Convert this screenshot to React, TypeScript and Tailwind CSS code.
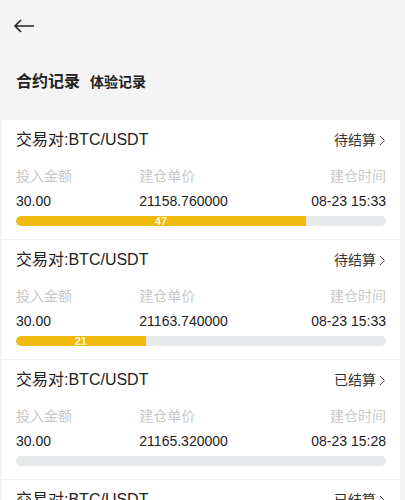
const records = [
  { price: '21158.760000', time: '08-23 15:33', status: '待结算', left: 47 },
  { price: '21163.740000', time: '08-23 15:33', status: '待结算', left: 21 },
  { price: '21165.320000', time: '08-23 15:28', status: '已结算', left: 0 },
  { price: '21165.320000', time: '08-23 15:28', status: '已结算', left: 0 },
];

function Chevron() {
  return (
    <svg width="7" height="11" viewBox="0 0 7 11" fill="none" className="ml-[3px]">
      <path d="M1 1l4.5 4.5L1 10" stroke="#555" strokeWidth="1" />
    </svg>
  );
}

function RecordCard({ price, time, status, left }: (typeof records)[number]) {
  return (
    <div className="border-b border-[#f1f1f1] px-[14px] pt-2 pb-[13px]">
      <div className="flex h-6 items-center justify-between">
        <span className="text-[16px] text-[#222]">交易对:BTC/USDT</span>
        <span className="flex items-center text-[14px] text-[#333]">
          {status}
          <Chevron />
        </span>
      </div>
      <div className="mt-[14px] grid h-5 grid-cols-3 items-center text-[14px] text-[#c8c8c8]">
        <span>投入金额</span>
        <span>建仓单价</span>
        <span className="text-right">建仓时间</span>
      </div>
      <div className="mt-[5px] grid h-5 grid-cols-3 items-center text-[14px] text-[#222]">
        <span>30.00</span>
        <span>{price}</span>
        <span className="text-right">{time}</span>
      </div>
      <div className="mt-[5px] h-[10px] overflow-hidden rounded-full bg-[#e8e9eb]">
        {left > 0 && (
          <div
            className="flex h-full items-center justify-center rounded-l-full bg-[#f0b90b] text-[11px] font-semibold leading-[10px] text-[#fff6d8]"
            style={{ width: `${(left / 60) * 100}%` }}
          >
            {left}
          </div>
        )}
      </div>
    </div>
  );
}

export default function App() {
  return (
    <div
      className="h-[500px] w-[405px] overflow-hidden bg-[#f4f4f4]"
      style={{ fontFamily: '"Liberation Sans", "Noto Sans CJK SC", sans-serif' }}
    >
      <div className="h-[120px] px-4">
        <div className="pt-[19px]">
          <svg width="22" height="14" viewBox="0 0 22 14" fill="none" className="-ml-[3px]">
            <path d="M21 7H2M8 1L2 7l6 6" stroke="#222" strokeWidth="1.6" />
          </svg>
        </div>
        <div className="mt-[37px] flex items-baseline gap-[10px]">
          <span className="text-[16px] font-bold text-[#222]">合约记录</span>
          <span className="text-[14px] font-bold text-[#222]">体验记录</span>
        </div>
      </div>
      <div className="ml-[2px] mr-[5px] bg-white">
        {records.map((r, i) => (
          <RecordCard key={i} {...r} />
        ))}
      </div>
    </div>
  );
}
